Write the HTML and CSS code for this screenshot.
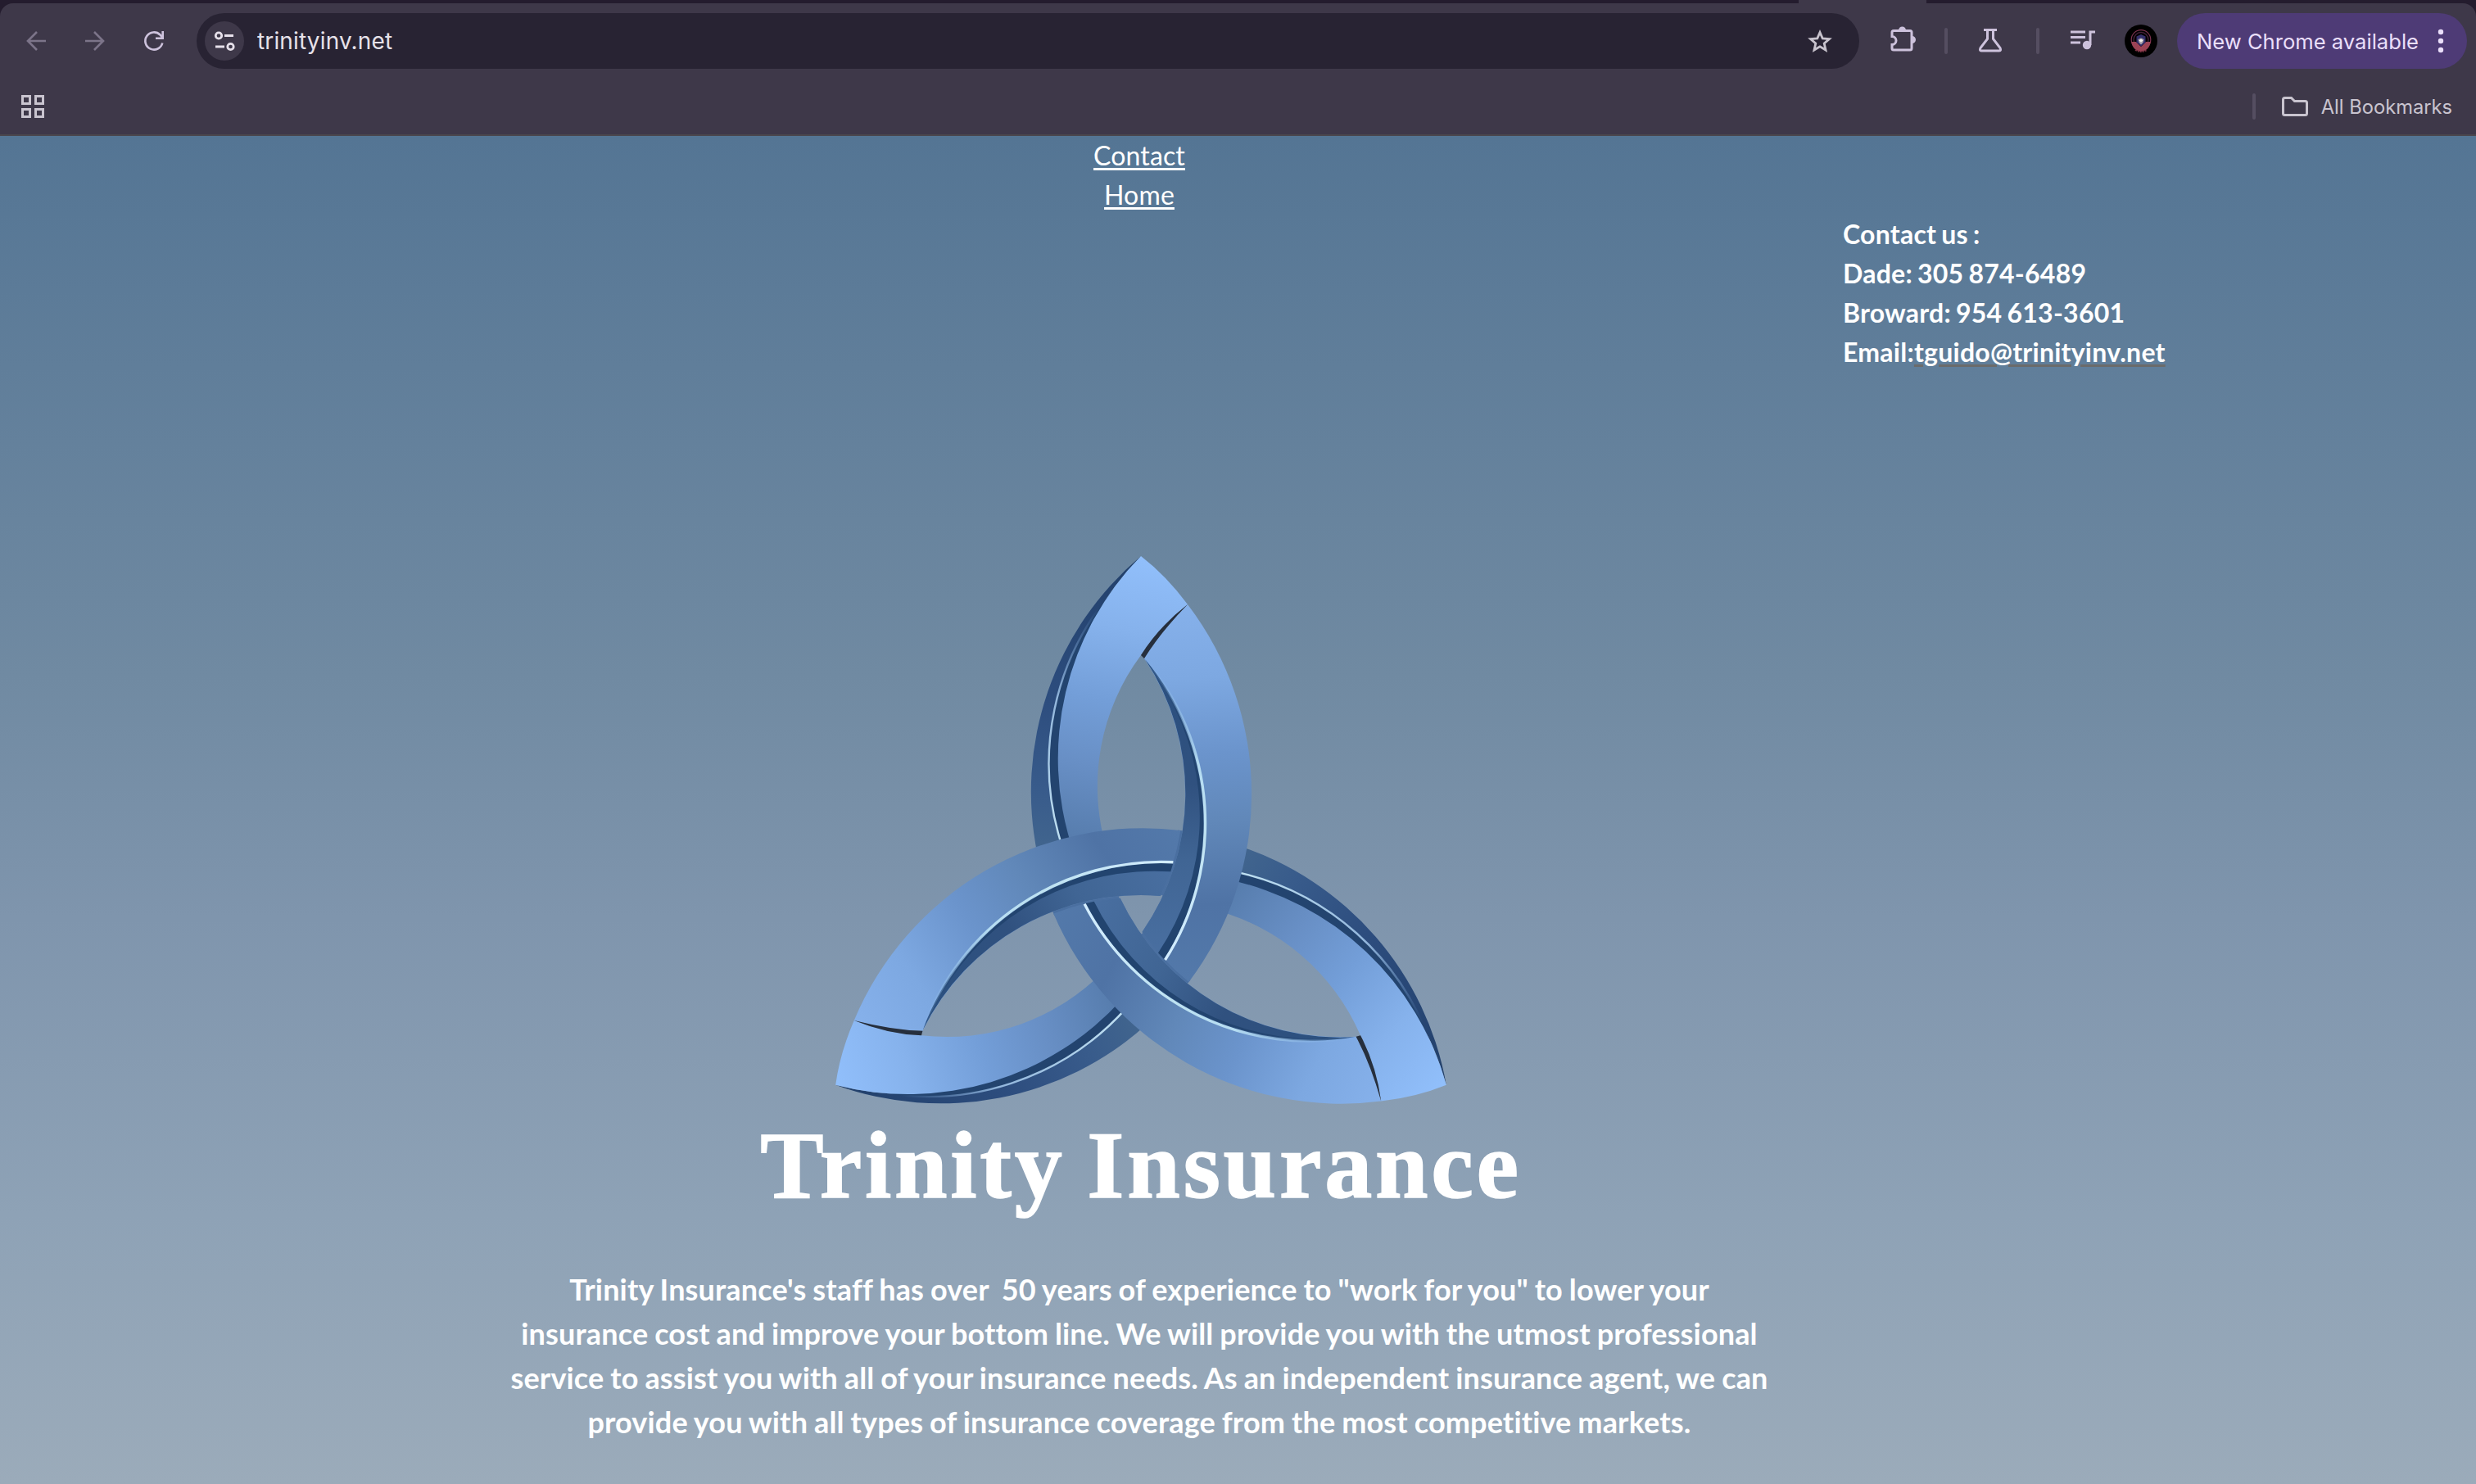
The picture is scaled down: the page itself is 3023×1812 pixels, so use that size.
FILE: index.html
```html
<!DOCTYPE html>
<html lang="en">
<head>
<meta charset="utf-8">
<title>Trinity Insurance</title>
<link rel="stylesheet" href="styles.css">
</head>
<body>
<div class="browser">
  <header class="chrome">
    <div class="tabline"><span class="tab"></span></div>
    <div class="toolbar">
      <svg class="nav-icon dim" viewBox="0 0 24 24"><path d="M24 12H2M13 1 2 12 13 23"/></svg>
      <svg class="nav-icon dim" viewBox="0 0 24 24"><path d="M0 12H22M11 1 22 12 11 23"/></svg>
      <svg class="nav-icon reload" viewBox="0 0 24 24"><path d="M22.300 14.500A10.600 10.600 0 1 1 19.500 4.500L22 7.500M22.700 0V8.700H14"/></svg>
      <div class="address">
        <span class="site-info"><svg width="28" height="28" viewBox="0 0 28 28"><circle cx="7" cy="7.500" r="3.700"/><path d="M14 7.500H25M3 21H14"/><circle cx="21.500" cy="21" r="3.700"/></svg></span>
        <span class="url">trinityinv.net</span>
        <svg class="star" viewBox="0 0 32 32"><path d="M16 5.500 19.200 12.800 27.500 13.500 21.200 19 23 27 16 22.800 9 27 10.800 19 4.500 13.500 12.800 12.800Z"/></svg>
      </div>
      <div class="actions">
        <svg class="ext" viewBox="0 0 36 36"><path d="M4 9.500Q4 7.500 6 7.500H26Q28 7.500 28 9.500V29Q28 31 26 31H6Q4 31 4 29V24.500A5 5 0 0 0 4 14.500Z"/><path class="solid" d="M12 7A4.500 4.500 0 0 1 21 7ZM28.500 14A4.500 4.500 0 0 1 28.500 23Z"/></svg>
        <i class="sep"></i>
        <svg class="flask" viewBox="0 0 32 32"><path d="M8 3.500H24M12.500 3.500V14.500L4 25.500Q2.500 29 5 29H27Q29.500 29 28 25.500L19.500 14.500V3.500"/></svg>
        <i class="sep"></i>
        <svg class="music" viewBox="0 0 32 26"><path d="M0 3H18M0 9.500H18M0 16H12"/><path d="M24 19V3H30"/><circle class="solid" cx="20" cy="19" r="5.200"/></svg>
        <svg class="avatar" viewBox="0 0 40 40"><circle cx="20" cy="20" r="20" fill="#000"/><circle cx="20" cy="18.500" r="11.800" fill="none" stroke="#7d3350" stroke-width="1.200"/><circle cx="20" cy="18.500" r="9" fill="none" stroke="#44203a" stroke-width="1.400"/><path d="M8.500 21A11.500 11.500 0 0 0 31.500 21H26L20 27 14 21Z" fill="#9c4355"/><path d="M13 31Q20 35 27 31" fill="none" stroke="#7d3344" stroke-width="2" stroke-dasharray="2 1"/><path d="M14.500 14.500 20 12 25.500 14.500V22L20 26.500 14.500 22Z" fill="#34306c"/><path d="M16.500 18 20 16.500 23.500 18 22.500 22 20 24.500 17.500 22Z" fill="#a9a3ac"/><path d="M17.500 19.500 20 17.500 22.500 19.500 20 21.500Z" fill="#f4f1e8"/></svg>
      </div>
      <div class="update"><span>New Chrome available</span><svg width="8" height="30" viewBox="0 0 8 30"><circle cx="4" cy="4" r="3.200"/><circle cx="4" cy="15" r="3.200"/><circle cx="4" cy="26" r="3.200"/></svg></div>
    </div>
    <div class="bookmarks">
      <svg class="apps" viewBox="0 0 28 28"><path d="M1.500 1.500H10.500V10.500H1.500ZM17.500 1.500H26.500V10.500H17.500ZM1.500 17.500H10.500V26.500H1.500ZM17.500 17.500H26.500V26.500H17.500Z"/></svg>
      <div class="all"><i class="sep"></i><svg class="folder" viewBox="0 0 32 24"><path d="M1.500 3.500Q1.500 1.500 3.500 1.500H11.500L15.500 5.500H28.500Q30.500 5.500 30.500 7.500V20.500Q30.500 22.500 28.500 22.500H3.500Q1.500 22.500 1.500 20.500Z"/></svg><span>All Bookmarks</span></div>
    </div>
  </header>

  <main class="page">
    <section class="main">
      <nav class="menu"><a href="#">Contact</a><a href="#">Home</a></nav>
      <svg class="logo" viewBox="1013 671 760 690">
        <defs>
          <linearGradient id="face-low" gradientUnits="userSpaceOnUse" x1="1390" y1="679" x2="1320" y2="1035">
            <stop offset="0" stop-color="#91bffb"/><stop offset=".25" stop-color="#86b2ec"/><stop offset=".5" stop-color="#739ed8"/><stop offset=".72" stop-color="#688fc5"/><stop offset="1" stop-color="#557bab"/>
          </linearGradient>
          <linearGradient id="side-low" gradientUnits="userSpaceOnUse" x1="1340" y1="679" x2="1300" y2="1040">
            <stop offset="0" stop-color="#22406b"/><stop offset=".5" stop-color="#2d4d7e"/><stop offset=".8" stop-color="#385b8b"/><stop offset="1" stop-color="#41658e"/>
          </linearGradient>
          <linearGradient id="face-top" gradientUnits="userSpaceOnUse" x1="1430" y1="738" x2="1460" y2="1198">
            <stop offset="0" stop-color="#86b1eb"/><stop offset=".2" stop-color="#7da8e1"/><stop offset=".4" stop-color="#6b94cc"/><stop offset=".58" stop-color="#6188b9"/><stop offset=".8" stop-color="#4f73a5"/><stop offset="1" stop-color="#5379aa"/>
          </linearGradient>
          <linearGradient id="side-top" gradientUnits="userSpaceOnUse" x1="1430" y1="808" x2="1430" y2="1180">
            <stop offset="0" stop-color="#2b507f"/><stop offset=".4" stop-color="#30517f"/><stop offset=".65" stop-color="#406594"/><stop offset="1" stop-color="#4a70a2"/>
          </linearGradient>
          <linearGradient id="shine" gradientUnits="userSpaceOnUse" x1="1430" y1="808" x2="1430" y2="1173">
            <stop offset="0" stop-color="#8fbdea" stop-opacity="0"/><stop offset=".35" stop-color="#b5dcf2"/><stop offset=".6" stop-color="#bfe3f2"/><stop offset="1" stop-color="#d3edff"/>
          </linearGradient>
          <linearGradient id="shine-low" gradientUnits="userSpaceOnUse" x1="1330" y1="740" x2="1300" y2="1024">
            <stop offset="0" stop-color="#6f98cc" stop-opacity="0"/><stop offset=".4" stop-color="#92b6dc"/><stop offset="1" stop-color="#bfe0f2"/>
          </linearGradient>
          <g id="low">
            <path fill="url(#side-low)" d="M1393 679A376 376 0 0 0 1267 1045L1310 1040A352 352 0 0 1 1393 679Z"/>
            <path fill="#23446f" d="M1363 716A325 325 0 0 0 1297 1034L1312 1034A352 352 0 0 1 1363 716Z"/>
            <path fill="none" stroke="url(#shine-low)" stroke-width="2.400" d="M1363 716A325 325 0 0 0 1297 1034"/>
            <path fill="url(#face-low)" d="M1393 679A352 352 0 0 0 1309 1035L1350 1033A268 268 0 0 1 1393 800Q1415 766 1450 738Q1424 703 1393 679Z"/>
          </g>
          <path id="seam" fill="none" stroke="#4a6fa0" stroke-width="6" d="M1451.500 1199A297 297 0 0 1 1395.500 1139"/>
          <g id="over">
            <path fill="url(#face-top)" d="M1450 738A382 382 0 0 1 1451.500 1199A297 297 0 0 1 1394.500 1138A297 297 0 0 0 1397 804Q1419 768 1450 738Z"/>
            <path fill="url(#side-top)" d="M1398 805A297 297 0 0 1 1394.500 1138Q1407 1156 1421 1171.500A309 309 0 0 0 1398 805Z"/>
            <path fill="#22446f" d="M1425 847A300 300 0 0 1 1414 1163.500L1421.500 1171.500A309 309 0 0 0 1425 847Z"/>
            <path fill="none" stroke="url(#shine)" stroke-width="3.400" d="M1398 805A309 309 0 0 1 1422.500 1172"/>
          </g>
          <path id="gap" fill="#262f3d" d="M1450 738Q1415 765 1393 800L1397 804Q1417 772 1450 738Z"/>
        </defs>
        <use href="#low"/><use href="#low" transform="rotate(120 1393 1109.500)"/><use href="#low" transform="rotate(240 1393 1109.500)"/>
        <use href="#seam"/><use href="#seam" transform="rotate(120 1393 1109.500)"/><use href="#seam" transform="rotate(240 1393 1109.500)"/>
        <use href="#over"/><use href="#over" transform="rotate(120 1393 1109.500)"/><use href="#over" transform="rotate(240 1393 1109.500)"/>
        <use href="#gap"/><use href="#gap" transform="rotate(120 1393 1109.500)"/><use href="#gap" transform="rotate(240 1393 1109.500)"/>
      </svg>
      <h1>Trinity Insurance</h1>
      <p class="intro">Trinity Insurance's staff has over &nbsp;50 years of experience to "work for you" to lower your<br>insurance cost and improve your bottom line. We will provide you with the utmost professional<br>service to assist you with all of your insurance needs. As an independent insurance agent, we can<br>provide you with all types of insurance coverage from the most competitive markets.</p>
    </section>
    <aside class="contact">Contact us :<br>Dade: 305 874-6489<br>Broward: 954 613-3601<br>Email:<a href="#">tguido@trinityinv.net</a></aside>
  </main>
</div>
</body>
</html>
```
FILE: styles.css
```css
* { box-sizing: border-box; }
body { margin: 0; background: #241c2e; }
.browser { width: 3023px; height: 1812px; overflow: hidden; display: flex; flex-direction: column; background: #241c2e; }
svg { display: block; flex: none; }

.chrome { height: 166px; flex: none; background: #3e3849; border-bottom: 2px solid #4a464d; font-family: Inter, sans-serif; }
.tabline { height: 20px; margin-bottom: -16px; background: #241c2e; padding-left: 2196px; }
.tab { display: block; width: 156px; height: 4px; background: #3e3849; }
.toolbar { position: relative; height: 92px; display: flex; align-items: center; padding: 0 11px 0 32px; background: #3e3849; border-radius: 16px 16px 0 0; }
.nav-icon { width: 24px; height: 24px; margin-right: 48px; fill: none; stroke: #cdc2dc; stroke-width: 2.6; overflow: visible; }
.nav-icon.dim { stroke: #7c7489; }
.nav-icon.reload { margin-right: 40px; }
.address { flex: none; width: 2030px; height: 68px; border-radius: 34px; background: #282333; display: flex; align-items: center; padding: 0 32px 0 10px; }
.site-info { width: 48px; height: 48px; border-radius: 50%; background: #3e3849; display: grid; place-items: center; }
.site-info svg { fill: none; stroke: #e6e0ea; stroke-width: 2.8; }
.url { flex: 1; margin-left: 16px; font-size: 28px; letter-spacing: .15px; color: #e6e1e9; }
.star { width: 32px; height: 32px; fill: none; stroke: #c8c3cd; stroke-width: 2.8; }
.actions { display: flex; align-items: center; flex: none; width: 388px; padding-left: 36px; }
.actions svg { fill: none; stroke: #cdc2dc; stroke-width: 3; }
.actions .solid { fill: #cdc2dc; stroke: none; }
.actions .ext { width: 36px; height: 36px; margin-top: -4px; }
.sep { width: 4px; height: 32px; border-radius: 2px; background: #554e61; flex: none; }
.actions .ext + .sep { margin: 0 36px 0 32px; }
.flask { width: 32px; height: 32px; margin-top: -2px; }
.flask + .sep { margin: 0 38px 0 40px; }
.music { width: 32px; height: 26px; margin: -2px 34px 0 0; }
.actions .avatar { width: 40px; height: 40px; stroke: none; }
.update { flex: none; width: 354px; height: 68px; border-radius: 34px; background: #4e3b76; color: #eadffa; font-size: 25.6px; display: flex; align-items: center; justify-content: space-between; padding: 0 28px 0 24px; white-space: nowrap; }
.update svg { fill: #eadffa; }
.bookmarks { height: 68px; display: flex; justify-content: space-between; align-items: center; padding: 0 29px 0 26px; }
.apps { width: 28px; height: 28px; fill: none; stroke: #c9c4cf; stroke-width: 3; }
.all { display: flex; align-items: center; color: #c9c4cf; font-size: 23.7px; }
.folder { width: 32px; height: 24px; margin: 0 16px 0 32px; fill: none; stroke: #c9c4cf; stroke-width: 3; }

.page { flex: 1; display: flex; color: #fff; font-family: Lato, sans-serif; font-variant-ligatures: none; background: linear-gradient(#547594, #708aa2 40%, #7f95ad 58%, #8ea2b6 80%, #9babba); }
.main { width: 1650px; margin-left: 566px; display: flex; flex-direction: column; align-items: center; }
.menu { display: flex; flex-direction: column; align-items: center; font-size: 32px; line-height: 48px; letter-spacing: .15px; }
.menu a { color: #fff; text-underline-offset: 3px; text-decoration-thickness: 3px; }
.logo { width: 760px; height: 690px; margin: 409px 0 0 4px; }
h1 { margin: -3px 0 0 4px; font: bold 116px/130px "Liberation Serif", serif; letter-spacing: 3.8px; word-spacing: -6px; white-space: nowrap; -webkit-text-stroke: 1.5px #fff; }
.intro { margin: 59px 0 0; font-size: 36px; line-height: 54px; font-weight: 700; letter-spacing: .15px; word-spacing: -1px; text-align: center; white-space: nowrap; }
.contact { margin: 96px 0 0 34px; font-size: 32px; line-height: 48px; font-weight: 700; letter-spacing: .25px; word-spacing: -2px; white-space: nowrap; }
.contact a { color: #fff; text-decoration-color: #6b6b6b; text-decoration-thickness: 3px; text-underline-offset: 3px; }
```
